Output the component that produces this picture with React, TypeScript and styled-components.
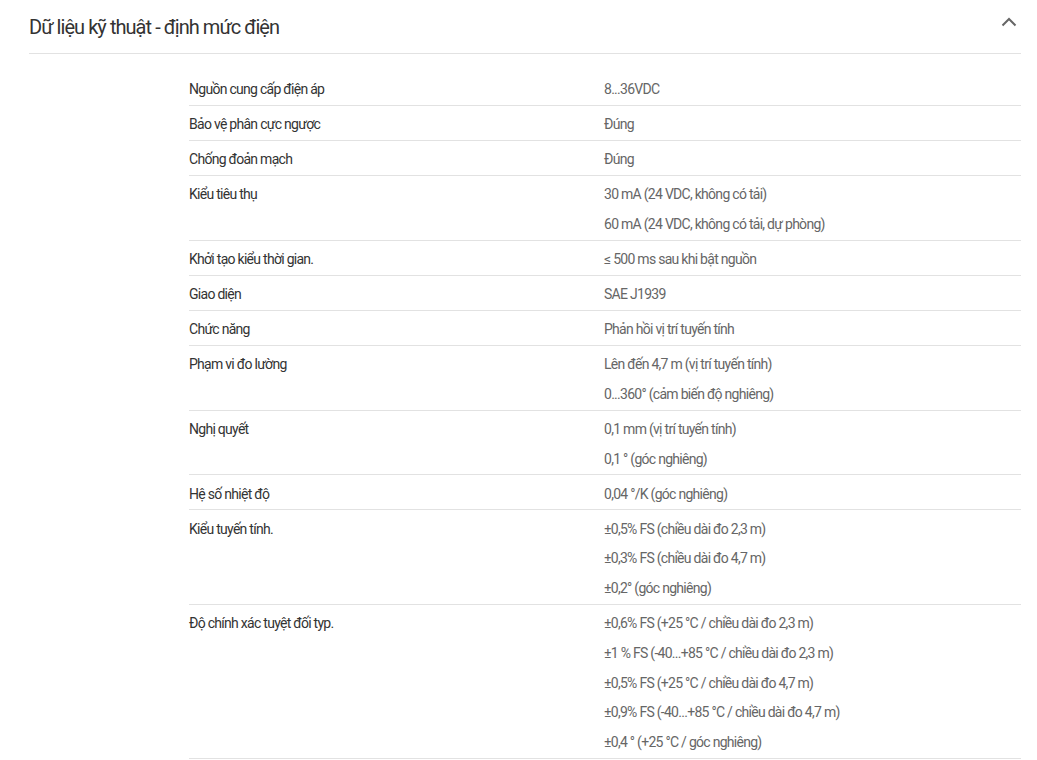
import React from "react";
import styled, { createGlobalStyle } from "styled-components";

const Global = createGlobalStyle`
  html, body { margin: 0; padding: 0; background: #fff; }
  body { font-family: Roboto, "Noto Sans", Arial, sans-serif; }
`;

const Page = styled.div`
  padding: 0 16px 0 29px;
`;

const Header = styled.div`
  display: flex;
  align-items: center;
  justify-content: space-between;
  height: 53px;
  border-bottom: 1px solid #e2e2e2;
`;

const Title = styled.h2`
  margin: 0;
  font-size: 20px;
  font-weight: 400;
  color: #333;
  letter-spacing: -0.95px;
`;

const Toggle = styled.button`
  border: 0;
  background: none;
  padding: 0;
  margin-right: 4px;
  margin-top: -10px;
  width: 16px;
  height: 16px;
  display: flex;
  align-items: center;
  justify-content: center;
  cursor: pointer;
`;

const Table = styled.div`
  margin: 17px 0 0 160px;
`;

const Row = styled.div`
  display: grid;
  grid-template-columns: 415px 1fr;
  padding: 4.25px 0 0;
  border-bottom: 1px solid #e2e2e2;
  font-size: 14px;
  line-height: 29.75px;
  letter-spacing: -0.72px;
`;

const Label = styled.div`
  color: #333;
`;

const Values = styled.div`
  color: #666;
  display: flex;
  flex-direction: column;
`;

const rows: [string, string[]][] = [
  ["Nguồn cung cấp điện áp", ["8...36VDC"]],
  ["Bảo vệ phân cực ngược", ["Đúng"]],
  ["Chống đoản mạch", ["Đúng"]],
  ["Kiểu tiêu thụ", ["30 mA (24 VDC, không có tải)", "60 mA (24 VDC, không có tải, dự phòng)"]],
  ["Khởi tạo kiểu thời gian.", ["≤ 500 ms sau khi bật nguồn"]],
  ["Giao diện", ["SAE J1939"]],
  ["Chức năng", ["Phản hồi vị trí tuyến tính"]],
  ["Phạm vi đo lường", ["Lên đến 4,7 m (vị trí tuyến tính)", "0...360° (cảm biến độ nghiêng)"]],
  ["Nghị quyết", ["0,1 mm (vị trí tuyến tính)", "0,1 ° (góc nghiêng)"]],
  ["Hệ số nhiệt độ", ["0,04 °/K (góc nghiêng)"]],
  ["Kiểu tuyến tính.", ["±0,5% FS (chiều dài đo 2,3 m)", "±0,3% FS (chiều dài đo 4,7 m)", "±0,2° (góc nghiêng)"]],
  [
    "Độ chính xác tuyệt đối typ.",
    [
      "±0,6% FS (+25 °C / chiều dài đo 2,3 m)",
      "±1 % FS (-40...+85 °C / chiều dài đo 2,3 m)",
      "±0,5% FS (+25 °C / chiều dài đo 4,7 m)",
      "±0,9% FS (-40...+85 °C / chiều dài đo 4,7 m)",
      "±0,4 ° (+25 °C / góc nghiêng)",
    ],
  ],
];

export default function App() {
  return (
    <>
      <Global />
      <Page>
        <Header>
          <Title>Dữ liệu kỹ thuật - định mức điện</Title>
          <Toggle aria-label="Thu gọn">
            <svg width="16" height="10" viewBox="0 0 16 10">
              <path d="M1.5 8.5 L8 2 L14.5 8.5" fill="none" stroke="#666" strokeWidth="2" />
            </svg>
          </Toggle>
        </Header>
        <Table>
          {rows.map(([label, vals]) => (
            <Row key={label}>
              <Label>{label}</Label>
              <Values>
                {vals.map((v) => (
                  <span key={v}>{v}</span>
                ))}
              </Values>
            </Row>
          ))}
        </Table>
      </Page>
    </>
  );
}
